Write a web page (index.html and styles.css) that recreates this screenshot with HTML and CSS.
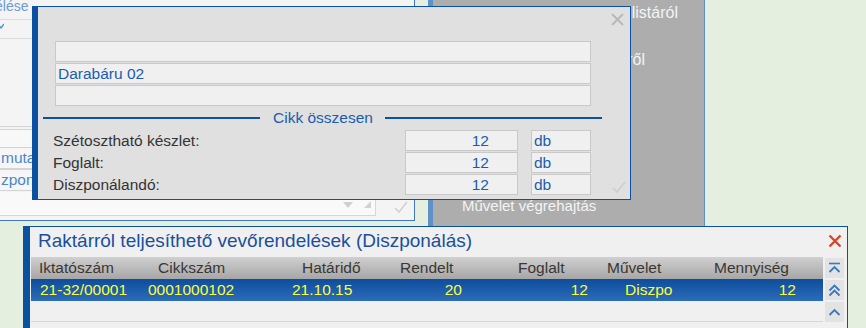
FILE: index.html
```html
<!doctype html>
<html lang="hu">
<head>
    <meta charset="UTF-8">
    <title>Diszponálás</title>
    <link rel="stylesheet" href="styles.css">
</head>
<body>
    <div class="desk">
        <!-- háttér ablak -->
        <div class="back-win">
            <div class="bw-title">élése</div>
            <div class="bw-row">
                <svg class="bw-chev" width="6" height="6" viewBox="0 0 6 6"><path d="M0 1 L3 5 L6 1" fill="none" stroke="#5a93d6" stroke-width="1.4"/></svg>
            </div>
            <div class="bw-space"></div>
            <div class="bw-row bw-double"></div>
            <div class="bw-input">mutató</div>
            <div class="bw-input">zpontok</div>
            <div class="bw-combo">
                <span class="bw-arrow"></span>
                <span class="bw-grip"></span>
                <svg class="bw-ok" width="14" height="12" viewBox="0 0 14 12"><path d="M1 7 L5 11 L13 1" fill="none" stroke="#d0d0d0" stroke-width="1.5"/></svg>
            </div>
        </div>

        <!-- szürke menü -->
        <div class="menu-panel">
            <div class="mp-item mp-first">Kiválasztás a listáról</div>
            <div class="mp-item mp-second">Készletről</div>
            <div class="mp-item mp-last">Művelet végrehajtás</div>
        </div>

        <!-- párbeszéd -->
        <div class="dialog">
            <svg class="dlg-close" width="13" height="13" viewBox="0 0 13 13"><path d="M1 1 L12 12 M12 1 L1 12" stroke="#b9b9b9" stroke-width="2"/></svg>
            <div class="field"></div>
            <div class="field">Darabáru 02</div>
            <div class="field"></div>
            <div class="section"><span>Cikk összesen</span></div>
            <div class="sum-row">
                <div class="sum-label">Szétosztható készlet:</div>
                <div class="sum-value">12</div>
                <div class="sum-unit">db</div>
            </div>
            <div class="sum-row">
                <div class="sum-label">Foglalt:</div>
                <div class="sum-value">12</div>
                <div class="sum-unit">db</div>
            </div>
            <div class="sum-row">
                <div class="sum-label">Diszponálandó:</div>
                <div class="sum-value">12</div>
                <div class="sum-unit">db</div>
            </div>
            <svg class="dlg-ok" width="14" height="12" viewBox="0 0 14 12"><path d="M1 7 L5 11 L13 1" fill="none" stroke="#cccccc" stroke-width="1.5"/></svg>
        </div>

        <!-- lista ablak -->
        <div class="list-win">
            <div class="lw-title">
                <span>Raktárról teljesíthető vevőrendelések (Diszponálás)</span>
                <svg width="14" height="14" viewBox="0 0 14 14"><path d="M1.5 1.5 L12.5 12.5 M12.5 1.5 L1.5 12.5" stroke="#d8452c" stroke-width="2.4"/></svg>
            </div>
            <div class="lw-body">
                <div class="grid">
                    <div class="head">
                        <span class="c1">Iktatószám</span>
                        <span class="c2">Cikkszám</span>
                        <span class="c3">Határidő</span>
                        <span class="c4">Rendelt</span>
                        <span class="c5">Foglalt</span>
                        <span class="c6">Művelet</span>
                        <span class="c7">Mennyiség</span>
                    </div>
                    <div class="row selected">
                        <span class="c1">21-32/00001</span>
                        <span class="c2">0001000102</span>
                        <span class="c3">21.10.15</span>
                        <span class="c4 num">20</span>
                        <span class="c5 num">12</span>
                        <span class="c6">Diszpo</span>
                        <span class="c7 num">12</span>
                    </div>
                    <div class="row empty"></div>
                </div>
                <div class="scroll">
                    <div class="sbtn">
                        <svg width="13" height="13" viewBox="0 0 13 13"><path d="M1 1.5 H12" stroke="#3a78c2" stroke-width="1.6"/><path d="M1.5 10 L6.5 5 L11.5 10" fill="none" stroke="#3a78c2" stroke-width="1.8"/></svg>
                    </div>
                    <div class="sbtn">
                        <svg width="13" height="13" viewBox="0 0 13 13"><path d="M1.5 6.5 L6.5 1.5 L11.5 6.5 M1.5 11.5 L6.5 6.5 L11.5 11.5" fill="none" stroke="#3a78c2" stroke-width="1.8"/></svg>
                    </div>
                    <div class="sbtn">
                        <svg width="13" height="13" viewBox="0 0 13 13"><path d="M1.5 9 L6.5 4 L11.5 9" fill="none" stroke="#3a78c2" stroke-width="1.8"/></svg>
                    </div>
                </div>
            </div>
        </div>
    </div>
</body>
</html>
```

FILE: styles.css
```css
*{margin: 0;padding: 0;box-sizing: border-box}
body{
    background: #e4efe0;
    font-family: "Liberation Sans", Arial, sans-serif;
    overflow: hidden;
}
.desk{
    position: relative;
    width: 866px;
    height: 328px;
    overflow: hidden;
}

/* háttér ablak */
.back-win{
    position: absolute;
    left: 0;
    top: 0;
    width: 415px;
    height: 221px;
    background: #f4f4f4;
    border-right: 1px solid #3f78c0;
    border-bottom: 1px solid #3f78c0;
    display: flex;
    flex-direction: column;
}
.back-win .bw-title{
    height: 20px;
    line-height: 12px;
    font-size: 14px;
    color: #6d9ad2;
    border-bottom: 1px solid #dcdcdc;
    text-indent: -5px;
    white-space: nowrap;
}
.back-win .bw-row{
    height: 19px;
    border-bottom: 1px solid #dcdcdc;
}
.back-win .bw-chev{
    display: block;
    margin: 3px 0 0 -2px;
}
.back-win .bw-space{height: 87px}
.back-win .bw-double{
    height: 21px;
    border-top: 1px solid #d4d4d4;
    border-bottom: none;
    box-shadow: inset 0 2px 0 #f4f4f4, inset 0 3px 0 #d4d4d4;
    background: #f8f8f8;
}
.back-win .bw-input{
    height: 22px;
    margin-right: 40px;
    border: 1px solid #d4d4d4;
    border-left: none;
    background: #f6f6f6;
    color: #4d87c9;
    font-size: 15.5px;
    line-height: 20px;
    padding-left: 1px;
}
.back-win .bw-combo{
    position: relative;
    margin-top: 1px;
    height: 24px;
    width: 376px;
    border-right: 1px solid #d6d6d6;
    border-bottom: 1px solid #d6d6d6;
    background: #f9f9f9;
}
.bw-combo .bw-arrow{
    position: absolute;
    right: 22px;
    top: 10px;
    border-left: 5px solid transparent;
    border-right: 5px solid transparent;
    border-top: 6px solid #cfcfcf;
}
.bw-combo .bw-grip{
    position: absolute;
    right: 4px;
    top: 9px;
    border-left: 7px solid transparent;
    border-bottom: 7px solid #d2d2d2;
}
.bw-combo .bw-ok{
    position: absolute;
    left: 394px;
    top: 9px;
}

/* szürke menü */
.menu-panel{
    position: absolute;
    left: 428px;
    top: 0;
    width: 277px;
    height: 230px;
    background: #adadad;
    border-left: 5px solid #5f91c9;
    border-right: 1px solid #5f91c9;
    color: #f4f4f4;
    font-size: 16px;
}
.menu-panel .mp-item{
    position: absolute;
    white-space: nowrap;
}
.menu-panel .mp-first{right: 26px;top: 4px}
.menu-panel .mp-second{right: 59px;top: 51px}
.menu-panel .mp-last{left: 29px;top: 197px;font-size: 15px}

/* párbeszéd */
.dialog{
    position: absolute;
    left: 32px;
    top: 6px;
    width: 599px;
    height: 194px;
    background: #e0e0e0;
    border: 1px solid #0c50a2;
    border-left: 6px solid #0c50a2;
    padding: 34px 39px 0 17px;
}
.dialog .dlg-close{
    position: absolute;
    left: 573px;
    top: 6px;
}
.dialog .dlg-ok{
    position: absolute;
    left: 574px;
    top: 174px;
}
.dialog .field{
    height: 21px;
    margin-bottom: 1px;
    background: #f0f0f0;
    border: 1px solid #c9c9c9;
    color: #1a5cb0;
    font-size: 15.5px;
    line-height: 19px;
    padding-left: 2px;
}
.dialog .section{
    display: flex;
    align-items: center;
    height: 21px;
    margin: 0 -11px 2px -12px;
    color: #1a5cb0;
    font-size: 15.5px;
}
.dialog .section::before,
.dialog .section::after{
    content: "";
    flex: 1;
    height: 0;
    border-top: 2px solid #0c50a2;
}
.dialog .section span{padding: 0 12px 0 13px}
.dialog .sum-row{
    display: flex;
    height: 21px;
    margin-bottom: 1px;
    font-size: 15.5px;
    line-height: 19px;
}
.dialog .sum-label{
    flex: 1;
    margin-left: -2px;
    color: #333333;
    line-height: 21px;
}
.dialog .sum-value,
.dialog .sum-unit{
    background: #f0f0f0;
    border: 1px solid #c9c9c9;
    color: #1a5cb0;
}
.dialog .sum-value{
    width: 113px;
    text-align: right;
    padding-right: 28px;
}
.dialog .sum-unit{
    width: 60px;
    margin-left: 13px;
    padding-left: 2px;
}

/* lista ablak */
.list-win{
    position: absolute;
    left: 23px;
    top: 226px;
    width: 825px;
    height: 110px;
    background: #f0f0f0;
    border: 1px solid #0c50a2;
    border-left: 7px solid #0c50a2;
}
.list-win .lw-title{
    display: flex;
    justify-content: space-between;
    align-items: center;
    height: 30px;
    padding: 0 5px 2px 8px;
    color: #1b4f9c;
    font-size: 19px;
}
.list-win .lw-body{
    display: flex;
    gap: 2px;
}
.list-win .grid{
    width: 792px;
    margin-left: 1px;
}
.grid .head,
.grid .row{
    display: grid;
    grid-template-columns: 110px 145px 94px 90px 126px 104px 123px;
    height: 22px;
    line-height: 22px;
    font-size: 15.5px;
    white-space: nowrap;
}
.grid .head{
    background: linear-gradient(#d0d0d0, #a6a6a6);
    color: #3b3733;
}
.grid .selected{
    background: linear-gradient(#0d4d9d, #2c6cb8);
    color: #fbff3a;
}
.grid .empty{
    height: 21px;
    border-bottom: 1px solid #d6d6d6;
}
.grid .num{text-align: right}
.head .c1{padding-left: 8px}
.head .c2{padding-left: 17px}
.head .c3{padding-left: 16px}
.head .c4{padding-left: 20px}
.head .c5{padding-left: 48px}
.head .c6{padding-left: 11px}
.head .c7{padding-left: 14px}
.selected .c1{padding-left: 9px}
.selected .c2{padding-left: 7px}
.selected .c3{padding-left: 6px}
.selected .c4{padding-right: 8px}
.selected .c5{padding-right: 8px}
.selected .c6{padding-left: 29px}
.selected .c7{padding-right: 27px}
.list-win .scroll{
    display: flex;
    flex-direction: column;
    gap: 2px;
    width: 19px;
    padding-top: 1px;
}
.scroll .sbtn{
    height: 20px;
    background: #e3e3e3;
    display: flex;
    align-items: center;
    justify-content: center;
}
```
